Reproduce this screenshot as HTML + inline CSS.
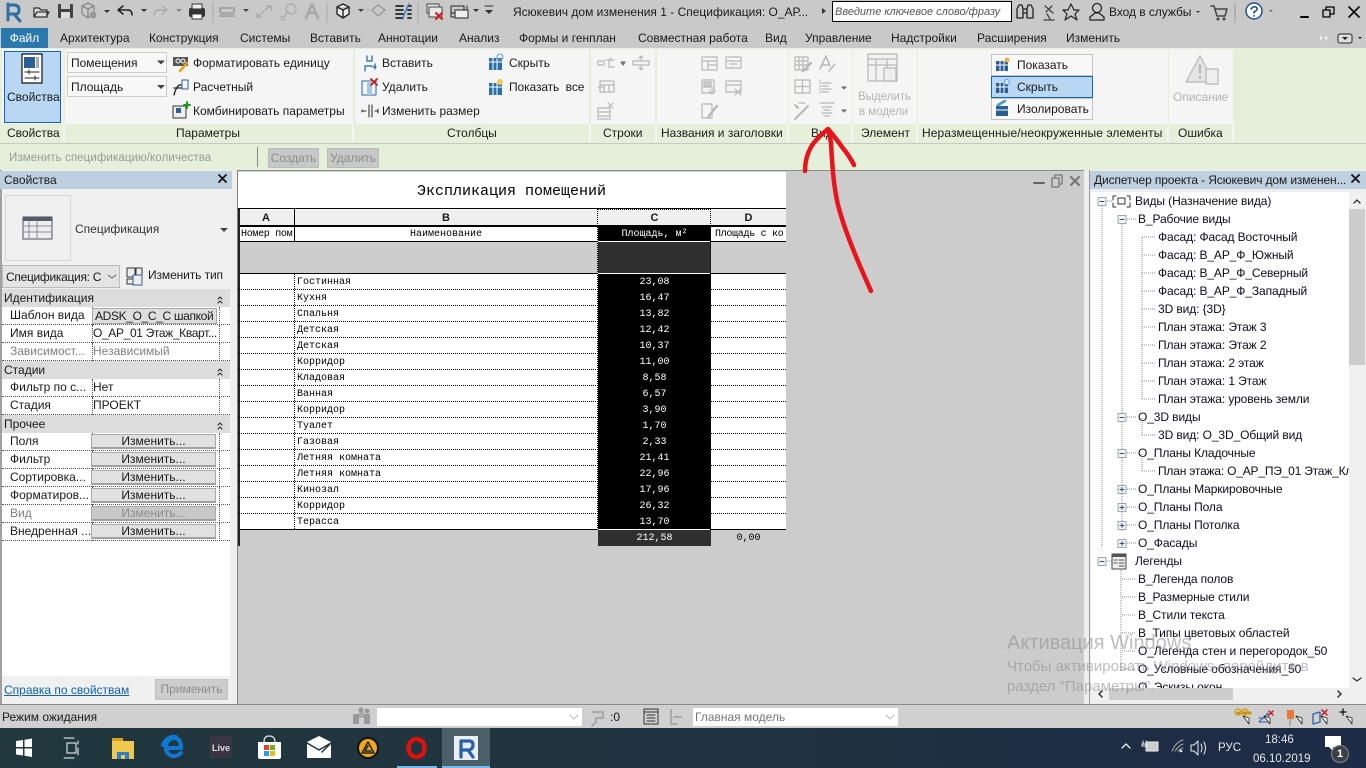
<!DOCTYPE html>
<html lang="ru"><head><meta charset="utf-8"><title>Revit</title>
<style>
html,body{margin:0;padding:0;width:1366px;height:768px;overflow:hidden;background:#ccc}
body{position:relative;font:12px "Liberation Sans","DejaVu Sans",sans-serif;color:#1a1a1a}
div,span{position:absolute;box-sizing:border-box}
.t{white-space:nowrap;line-height:16px;height:16px}
.b{background:#f5f5f5}
.g{background:#e6efd9}
.gl{color:#b4b4b4}
.m{font-family:"Liberation Mono",monospace;font-size:10px;color:#000;white-space:nowrap;line-height:16px;height:16px;margin-top:1px}
.w{color:#fff;width:113px;left:598px;text-align:center}
.row{left:238px;width:548px;height:0;border-top:1px dotted #000}
.pr{left:2px;width:228px;height:18px;border-bottom:1px dotted #555;background:#fff}
.pc{left:90px;width:1px;height:18px;border-left:1px dotted #555;top:0}
.pc2{left:217px;width:1px;height:18px;border-left:1px dotted #555;top:0}
.ph{left:2px;width:228px;height:18px;background:#dcdcdc}
.btn{left:91px;width:125px;height:15px;background:#e1e1e1;border:1px solid #a8a8a8;border-bottom:2px solid #a0a0a0;text-align:center;line-height:13px}
.tr{white-space:nowrap;line-height:16px;height:16px;color:#0c0c1c;letter-spacing:-.1px}
.sep{top:124px;width:2px;height:18px;background:#f5f5f5}
svg{position:absolute;overflow:visible}
</style></head><body>

<!-- title bar + tabs -->
<div style="left:0;top:0;width:1366px;height:48px;background:#c9c9c9"></div>
<div style="left:1px;top:28px;width:47px;height:20px;background:#2b78ae;color:#fff;text-align:center;line-height:20px">Файл</div>
<div class="t" style="left:60px;top:30px">Архитектура</div>
<div class="t" style="left:149px;top:30px">Конструкция</div>
<div class="t" style="left:240px;top:30px">Системы</div>
<div class="t" style="left:310px;top:30px">Вставить</div>
<div class="t" style="left:378px;top:30px">Аннотации</div>
<div class="t" style="left:459px;top:30px">Анализ</div>
<div class="t" style="left:519px;top:30px">Формы и генплан</div>
<div class="t" style="left:638px;top:30px">Совместная работа</div>
<div class="t" style="left:765px;top:30px">Вид</div>
<div class="t" style="left:805px;top:30px">Управление</div>
<div class="t" style="left:891px;top:30px">Надстройки</div>
<div class="t" style="left:977px;top:30px">Расширения</div>
<div class="t" style="left:1066px;top:30px">Изменить</div>
<div class="t" style="left:513px;top:4px;width:296px;overflow:hidden">Ясюкевич дом изменения 1 - Спецификация: О_АР...</div>
<div style="left:832px;top:1px;width:180px;height:21px;background:#fff;border:1px solid #000"></div>
<div class="t" style="left:835px;top:4px;font-style:italic;color:#555;font-size:11px;width:175px;overflow:hidden">Введите ключевое слово/фразу</div>
<div class="t" style="left:1109px;top:4px;letter-spacing:-.05px">Вход в службы</div>

<!-- ribbon -->
<div class="g" style="left:0;top:48px;width:1366px;height:96px"></div>
<div class="b" style="left:2px;top:49px;width:61px;height:75px"></div>
<div class="b" style="left:65px;top:49px;width:288px;height:75px"></div>
<div class="b" style="left:355px;top:49px;width:234px;height:75px"></div>
<div class="b" style="left:591px;top:49px;width:64px;height:75px"></div>
<div class="b" style="left:657px;top:49px;width:131px;height:75px"></div>
<div class="b" style="left:789px;top:49px;width:63px;height:75px"></div>
<div class="b" style="left:853px;top:49px;width:64px;height:75px"></div>
<div class="b" style="left:918px;top:49px;width:250px;height:75px"></div>
<div class="b" style="left:1169px;top:49px;width:64px;height:75px"></div>
<div class="sep" style="left:63px"></div><div class="sep" style="left:352px"></div><div class="sep" style="left:589px"></div>
<div class="sep" style="left:655px"></div><div class="sep" style="left:787px"></div><div class="sep" style="left:851px"></div>
<div class="sep" style="left:916px"></div><div class="sep" style="left:1167px"></div><div class="sep" style="left:1232px"></div>
<div style="left:0;top:143px;width:1366px;height:1px;background:#c8c8c8"></div>
<div style="left:4px;top:51px;width:57px;height:72px;background:#b9d6f2;border:1px solid #1066c0"></div>
<div class="t" style="left:7px;top:89px">Свойства</div>
<div style="left:67px;top:52px;width:100px;height:21px;background:#f8f8f8;border:1px solid #ccc"></div>
<div style="left:67px;top:76px;width:100px;height:21px;background:#f8f8f8;border:1px solid #ccc"></div>
<div class="t" style="left:71px;top:55px">Помещения</div>
<div class="t" style="left:71px;top:79px">Площадь</div>
<div class="t" style="left:193px;top:55px">Форматировать единицу</div>
<div class="t" style="left:193px;top:79px">Расчетный</div>
<div class="t" style="left:193px;top:103px">Комбинировать параметры</div>
<div class="t" style="left:382px;top:55px">Вставить</div>
<div class="t" style="left:382px;top:79px">Удалить</div>
<div class="t" style="left:382px;top:103px">Изменить размер</div>
<div class="t" style="left:509px;top:55px">Скрыть</div>
<div class="t" style="left:509px;top:79px;letter-spacing:-.1px">Показать&nbsp; все</div>
<div class="t gl" style="left:858px;top:89px;font-size:11.5px">Выделить</div>
<div class="t gl" style="left:859px;top:104px;font-size:11.5px">в модели</div>
<div style="left:991px;top:54px;width:102px;height:22px;background:#f8f8f8;border:1px solid #c4c4c4"></div>
<div style="left:991px;top:76px;width:102px;height:22px;background:#b9d6f2;border:1px solid #1066c0"></div>
<div style="left:991px;top:98px;width:102px;height:22px;background:#f8f8f8;border:1px solid #c4c4c4"></div>
<div class="t" style="left:1017px;top:57px">Показать</div>
<div class="t" style="left:1017px;top:79px">Скрыть</div>
<div class="t" style="left:1017px;top:101px">Изолировать</div>
<div class="t gl" style="left:1173px;top:89px">Описание</div>
<div class="t" style="left:7px;top:125px">Свойства</div>
<div class="t" style="left:176px;top:125px">Параметры</div>
<div class="t" style="left:447px;top:125px">Столбцы</div>
<div class="t" style="left:603px;top:125px">Строки</div>
<div class="t" style="left:661px;top:125px">Названия и заголовки</div>
<div class="t" style="left:811px;top:125px">Вид</div>
<div class="t" style="left:861px;top:125px">Элемент</div>
<div class="t" style="left:922px;top:125px;letter-spacing:.1px">Неразмещенные/неокруженные элементы</div>
<div class="t" style="left:1178px;top:125px">Ошибка</div>

<!-- mode bar -->
<div class="g" style="left:0;top:144px;width:1366px;height:26px"></div>
<div class="t" style="left:9px;top:150px;color:#9a9a9a;font-size:11.5px;letter-spacing:.1px">Изменить спецификацию/количества</div>
<div style="left:257px;top:147px;width:1px;height:20px;background:#888"></div>
<div style="left:268px;top:148px;width:51px;height:20px;background:#c8c8c8;border:1px solid #bbb;color:#8c8c8c;text-align:center;line-height:18px">Создать</div>
<div style="left:327px;top:148px;width:52px;height:20px;background:#c8c8c8;border:1px solid #bbb;color:#8c8c8c;text-align:center;line-height:18px">Удалить</div>

<!-- properties -->
<div style="left:0;top:170px;width:232px;height:535px;background:#f0f0f0;border-left:2px solid #a0a0a0;border-bottom:1px solid #888"></div>
<div style="left:0;top:171px;width:232px;height:18px;background:#bed0e0"></div>
<div class="t" style="left:4px;top:172px">Свойства</div>
<div style="left:5px;top:195px;width:66px;height:66px;background:#f0f0f0;border:1px solid #d4d4d4"></div>
<div class="t" style="left:75px;top:221px;color:#333">Спецификация</div>
<div style="left:2px;top:265px;width:118px;height:23px;background:#e4e4e4;border:1px solid #bbb"></div>
<div class="t" style="left:6px;top:269px;letter-spacing:-.3px">Спецификация: С</div>
<div class="t" style="left:148px;top:267px;letter-spacing:-.1px">Изменить тип</div>
<div class="ph" style="top:289px"></div><div class="t" style="left:4px;top:290px">Идентификация</div>
<div class="pr" style="top:307px"><div class="pc"></div><div class="pc2"></div></div>
<div class="pr" style="top:325px"><div class="pc"></div><div class="pc2"></div></div>
<div class="pr" style="top:343px"><div class="pc"></div><div class="pc2"></div></div>
<div class="ph" style="top:361px"></div><div class="t" style="left:4px;top:362px">Стадии</div>
<div class="pr" style="top:379px"><div class="pc"></div><div class="pc2"></div></div>
<div class="pr" style="top:397px"><div class="pc"></div><div class="pc2"></div></div>
<div class="ph" style="top:415px"></div><div class="t" style="left:4px;top:416px">Прочее</div>
<div class="pr" style="top:433px"><div class="pc"></div><div class="pc2"></div></div>
<div class="pr" style="top:451px"><div class="pc"></div><div class="pc2"></div></div>
<div class="pr" style="top:469px"><div class="pc"></div><div class="pc2"></div></div>
<div class="pr" style="top:487px"><div class="pc"></div><div class="pc2"></div></div>
<div class="pr" style="top:505px"><div class="pc"></div><div class="pc2"></div></div>
<div class="pr" style="top:523px"><div class="pc"></div><div class="pc2"></div></div>
<div class="t" style="left:10px;top:307px">Шаблон вида</div>
<div class="t" style="left:10px;top:325px">Имя вида</div>
<div class="t" style="left:10px;top:343px;color:#808080">Зависимост...</div>
<div class="t" style="left:10px;top:379px">Фильтр по с...</div>
<div class="t" style="left:10px;top:397px">Стадия</div>
<div class="t" style="left:10px;top:433px">Поля</div>
<div class="t" style="left:10px;top:451px">Фильтр</div>
<div class="t" style="left:10px;top:469px">Сортировка...</div>
<div class="t" style="left:10px;top:487px">Форматиров...</div>
<div class="t" style="left:10px;top:505px;color:#808080">Вид</div>
<div class="t" style="left:10px;top:523px">Внедренная ...</div>
<div style="left:92px;top:308px;width:125px;height:16px;background:#dedede;border:1px solid #a8a8a8"></div>
<div class="t" style="left:95px;top:308px;letter-spacing:-.35px">ADSK_О_С_С шапкой</div>
<div class="t" style="left:93px;top:325px;letter-spacing:-.35px">О_АР_01 Этаж_Кварт...</div>
<div class="t" style="left:93px;top:343px;color:#808080">Независимый</div>
<div class="t" style="left:93px;top:379px">Нет</div>
<div class="t" style="left:93px;top:397px">ПРОЕКТ</div>
<div class="btn" style="top:434px">Изменить...</div>
<div class="btn" style="top:452px">Изменить...</div>
<div class="btn" style="top:470px">Изменить...</div>
<div class="btn" style="top:488px">Изменить...</div>
<div class="btn" style="top:506px;background:#c8c8c8;color:#8c8c8c">Изменить...</div>
<div class="btn" style="top:524px">Изменить...</div>
<div style="left:2px;top:541px;width:228px;height:135px;background:#fff"></div>
<div class="t" style="left:4px;top:682px;color:#0f62b0;text-decoration:underline">Справка по свойствам</div>
<div style="left:155px;top:679px;width:73px;height:21px;background:#cdcdcd;border:1px solid #c0c0c0;color:#8c8c8c;text-align:center;line-height:19px">Применить</div>

<!-- canvas -->
<div style="left:232px;top:170px;width:858px;height:534px;background:#ccc;border-top:1px solid #8a8a8a"></div>
<div style="left:232px;top:170px;width:6px;height:534px;background:#eee;border-right:1px solid #808080"></div>
<div style="left:238px;top:172px;width:548px;height:374px;background:#fff"></div>
<div style="left:238px;top:242px;width:548px;height:31px;background:#cdcdcd"></div>
<div style="left:238px;top:530px;width:548px;height:16px;background:#ccc"></div>
<div style="left:598px;top:227px;width:113px;height:303px;background:#000"></div>
<div style="left:598px;top:242px;width:113px;height:31px;background:#2f2f2f"></div>
<div style="left:598px;top:530px;width:113px;height:16px;background:#2f2f2f"></div>
<div style="left:238px;top:210px;width:548px;height:16px;background:#efefef"></div>
<div style="left:238px;top:208px;width:548px;height:1px;background:#000"></div>
<div style="left:238px;top:225px;width:548px;height:2px;background:#000"></div>
<div style="left:238px;top:241px;width:360px;height:1px;background:#000"></div>
<div style="left:711px;top:241px;width:75px;height:1px;background:#000"></div>
<div style="left:598px;top:241px;width:113px;height:1px;background:#fff"></div>
<div style="left:238px;top:273px;width:360px;height:1px;background:#000"></div>
<div style="left:711px;top:273px;width:75px;height:1px;background:#000"></div>
<div style="left:598px;top:273px;width:113px;height:1px;background:#fff"></div>
<div style="left:238px;top:529px;width:360px;height:1px;background:#000"></div>
<div style="left:711px;top:529px;width:75px;height:1px;background:#000"></div>
<div style="left:598px;top:529px;width:113px;height:1px;background:#fff"></div>
<div style="left:238px;top:209px;width:2px;height:337px;background:#222"></div>
<div style="left:294px;top:209px;width:1px;height:32px;background:#000"></div>
<div style="left:294px;top:274px;height:255px;border-left:1px dotted #000"></div>
<div style="left:597px;top:209px;height:321px;border-left:1px dotted #000"></div>
<div style="left:710px;top:209px;height:321px;border-left:1px dotted #000"></div>
<div style="left:597px;top:209px;width:114px;height:17px;border:1px dotted #000"></div>
<div class="row" style="top:289px"></div><div class="row" style="top:305px"></div><div class="row" style="top:321px"></div>
<div class="row" style="top:337px"></div><div class="row" style="top:353px"></div><div class="row" style="top:369px"></div>
<div class="row" style="top:385px"></div><div class="row" style="top:401px"></div><div class="row" style="top:417px"></div>
<div class="row" style="top:433px"></div><div class="row" style="top:449px"></div><div class="row" style="top:465px"></div>
<div class="row" style="top:481px"></div><div class="row" style="top:497px"></div><div class="row" style="top:513px"></div>

<div class="m" style="left:417px;top:181px;width:190px;height:20px;line-height:20px;font-size:15px">Экспликация помещений</div>
<div class="t" style="left:238px;top:210px;width:56px;text-align:center;font-weight:bold;font-size:11px">A</div>
<div class="t" style="left:294px;top:210px;width:304px;text-align:center;font-weight:bold;font-size:11px">B</div>
<div class="t" style="left:598px;top:210px;width:113px;text-align:center;font-weight:bold;font-size:11px">C</div>
<div class="t" style="left:711px;top:210px;width:75px;text-align:center;font-weight:bold;font-size:11px">D</div>
<div class="m" style="left:241px;top:226px;letter-spacing:-.3px">Номер пом</div>
<div class="m" style="left:294px;top:226px;width:304px;text-align:center">Наименование</div>
<div class="m w" style="top:226px">Площадь, м²</div>
<div class="m" style="left:715px;top:226px;letter-spacing:-.3px">Площадь с ко</div>

<div class="m" style="left:297px;top:274px">Гостинная</div><div class="m w" style="top:274px">23,08</div>
<div class="m" style="left:297px;top:290px">Кухня</div><div class="m w" style="top:290px">16,47</div>
<div class="m" style="left:297px;top:306px">Спальня</div><div class="m w" style="top:306px">13,82</div>
<div class="m" style="left:297px;top:322px">Детская</div><div class="m w" style="top:322px">12,42</div>
<div class="m" style="left:297px;top:338px">Детская</div><div class="m w" style="top:338px">10,37</div>
<div class="m" style="left:297px;top:354px">Корридор</div><div class="m w" style="top:354px">11,00</div>
<div class="m" style="left:297px;top:370px">Кладовая</div><div class="m w" style="top:370px">8,58</div>
<div class="m" style="left:297px;top:386px">Ванная</div><div class="m w" style="top:386px">6,57</div>
<div class="m" style="left:297px;top:402px">Корридор</div><div class="m w" style="top:402px">3,90</div>
<div class="m" style="left:297px;top:418px">Туалет</div><div class="m w" style="top:418px">1,70</div>
<div class="m" style="left:297px;top:434px">Газовая</div><div class="m w" style="top:434px">2,33</div>
<div class="m" style="left:297px;top:450px">Летняя комната</div><div class="m w" style="top:450px">21,41</div>
<div class="m" style="left:297px;top:466px">Летняя комната</div><div class="m w" style="top:466px">22,96</div>
<div class="m" style="left:297px;top:482px">Кинозал</div><div class="m w" style="top:482px">17,96</div>
<div class="m" style="left:297px;top:498px">Корридор</div><div class="m w" style="top:498px">26,32</div>
<div class="m" style="left:297px;top:514px">Терасса</div><div class="m w" style="top:514px">13,70</div>
<div class="m w" style="top:530px">212,58</div>
<div class="m" style="left:711px;top:530px;width:75px;text-align:center">0,00</div>

<!-- project browser -->
<div style="left:1084px;top:170px;width:282px;height:535px;background:#eee"></div>
<div style="left:1089px;top:170px;width:1px;height:534px;background:#9a9a9a"></div>
<div style="left:1090px;top:171px;width:276px;height:18px;background:#bed0e0"></div>
<div class="t" style="left:1094px;top:172px;width:252px;overflow:hidden;letter-spacing:-.12px">Диспетчер проекта - Ясюкевич дом изменен...</div>
<div style="left:1091px;top:192px;width:258px;height:496px;background:#fff;overflow:hidden">
<div class="tr" style="left:44px;top:1px">Виды (Назначение вида)</div>
<div class="tr" style="left:47px;top:19px">В_Рабочие виды</div>
<div class="tr" style="left:67px;top:37px">Фасад: Фасад Восточный</div>
<div class="tr" style="left:67px;top:55px">Фасад: В_АР_Ф_Южный</div>
<div class="tr" style="left:67px;top:73px">Фасад: В_АР_Ф_Северный</div>
<div class="tr" style="left:67px;top:91px">Фасад: В_АР_Ф_Западный</div>
<div class="tr" style="left:67px;top:109px">3D вид: {3D}</div>
<div class="tr" style="left:67px;top:127px">План этажа: Этаж 3</div>
<div class="tr" style="left:67px;top:145px">План этажа: Этаж 2</div>
<div class="tr" style="left:67px;top:163px">План этажа: 2 этаж</div>
<div class="tr" style="left:67px;top:181px">План этажа: 1 Этаж</div>
<div class="tr" style="left:67px;top:199px">План этажа: уровень земли</div>
<div class="tr" style="left:47px;top:217px">О_3D виды</div>
<div class="tr" style="left:67px;top:235px">3D вид: О_3D_Общий вид</div>
<div class="tr" style="left:47px;top:253px">О_Планы Кладочные</div>
<div class="tr" style="left:67px;top:271px;letter-spacing:-.2px">План этажа: О_АР_ПЭ_01 Этаж_Кла</div>
<div class="tr" style="left:47px;top:289px">О_Планы Маркировочные</div>
<div class="tr" style="left:47px;top:307px">О_Планы Пола</div>
<div class="tr" style="left:47px;top:325px">О_Планы Потолка</div>
<div class="tr" style="left:47px;top:343px">О_Фасады</div>
<div class="tr" style="left:44px;top:361px">Легенды</div>
<div class="tr" style="left:47px;top:379px">В_Легенда полов</div>
<div class="tr" style="left:47px;top:397px">В_Размерные стили</div>
<div class="tr" style="left:47px;top:415px">В_Стили текста</div>
<div class="tr" style="left:47px;top:433px">В_Типы цветовых областей</div>
<div class="tr" style="left:47px;top:451px">О_Легенда стен и перегородок_50</div>
<div class="tr" style="left:47px;top:469px">О_Условные обозначения_50</div>
<div class="tr" style="left:47px;top:487px">О_Эскизы окон</div>
<svg width="258" height="496" style="left:0;top:0" fill="none" stroke="#888" stroke-dasharray="1 1">
<path d="M11 14V356M31 28V340M51 46V208M51 226V244M51 262V280M30 370V480"/>
<path d="M16 9H22M36 27H45M51 45H65M51 63H65M51 81H65M51 99H65M51 117H65M51 135H65M51 153H65M51 171H65M51 189H65M51 207H65M36 225H45M51 243H65M36 261H45M51 279H65M36 297H45M36 315H45M36 333H45M36 351H45M16 369H21M31 387H45M31 405H45M31 423H45M31 441H45M31 459H45M31 477H45"/>
</svg>
</div>
<div style="left:1349px;top:192px;width:17px;height:496px;background:#f0f0f0"></div>
<div style="left:1349px;top:209px;width:16px;height:156px;background:#cdcdcd"></div>
<div style="left:1091px;top:688px;width:275px;height:12px;background:#f0f0f0"></div>
<div style="left:1109px;top:688px;width:124px;height:12px;background:#cdcdcd"></div>
<div class="t" style="left:1007px;top:632px;color:#8a8a8a;opacity:.55;font-size:20px;height:22px;line-height:22px">Активация Windows</div>
<div class="t" style="left:1007px;top:658px;color:#8a8a8a;opacity:.55;font-size:15px;height:18px;line-height:18px">Чтобы активировать Windows, перейдите в</div>
<div class="t" style="left:1007px;top:678px;color:#8a8a8a;opacity:.55;font-size:15px;height:18px;line-height:18px">раздел "Параметры".</div>

<!-- status -->
<div style="left:0;top:704px;width:1366px;height:24px;background:#d0d0d0;border-top:1px solid #8a8a8a"></div>
<div class="t" style="left:2px;top:709px">Режим ожидания</div>
<div style="left:377px;top:708px;width:205px;height:18px;background:#fff"></div>
<div class="t" style="left:610px;top:709px">:0</div>
<div style="left:693px;top:708px;width:205px;height:18px;background:#fff"></div>
<div class="t" style="left:695px;top:709px;color:#777">Главная модель</div>

<!-- taskbar -->
<div style="left:0;top:728px;width:1366px;height:40px;background:linear-gradient(90deg,#21383f,#20323f 50%,#1d2b47)"></div>
<div style="left:442px;top:728px;width:48px;height:40px;background:#4b5f69"></div>
<div style="left:397px;top:766px;width:40px;height:2px;background:#76b9ed"></div>
<div style="left:442px;top:766px;width:48px;height:2px;background:#76b9ed"></div>
<div class="t" style="left:1218px;top:740px;color:#e8e8e8;font-size:11.5px">РУС</div>
<div class="t" style="left:1265px;top:732px;color:#e8e8e8;font-size:11.5px">18:46</div>
<div class="t" style="left:1253px;top:751px;color:#e8e8e8;font-size:11.5px">06.10.2019</div>

<!-- icons overlay -->
<svg width="1366" height="768" style="left:0;top:0" fill="none" stroke-linecap="round" stroke-linejoin="round">
<!-- QAT -->
<path d="M8 4V20M8 5H14Q19 5 19 10T14 14H8M14 14L20 21" stroke="#2a6fa8" stroke-width="3"/>
<path d="M34 17V8H39L41 10H47V17ZM34 17L37 12H49L46 17" stroke="#333" stroke-width="1.3" fill="#ddd"/>
<rect x="58" y="4" width="15" height="14" rx="1" fill="#444"/><rect x="61" y="4" width="9" height="5" fill="#ccc"/><rect x="61" y="12" width="9" height="6" fill="#ddd"/>
<path d="M82 6L88 3L94 6V14L88 18L82 14ZM82 6L88 9L94 6M88 9V18" stroke="#888" stroke-width="1.3"/><circle cx="93" cy="15" r="3.5" fill="#999"/>
<path d="M104 10l3 3 3-3z" fill="#333"/>
<path d="M123 6L118 10L123 14M119 10H128Q132 10 132 15" stroke="#222" stroke-width="1.5"/>
<path d="M141 9l3 3 3-3z" fill="#333"/>
<path d="M162 6L167 10L162 14M166 10H158Q154 10 154 15" stroke="#aaa" stroke-width="1.4"/>
<path d="M176 9l3 3 3-3z" fill="#888"/>
<rect x="189" y="8" width="16" height="9" rx="2" fill="#333"/><rect x="192" y="4" width="10" height="5" fill="#eee" stroke="#333"/><rect x="192" y="14" width="10" height="5" fill="#fff" stroke="#333"/>
<path d="M213 3V22M327 3V22M418 3V22" stroke="#aaa"/>
<path d="M220 8H234M220 16H234M220 8V12M234 8V12" stroke="#999" stroke-width="1.6"/><rect x="220" y="12" width="14" height="4" fill="#aaa"/>
<path d="M243 9l3 3 3-3z" fill="#444"/>
<path d="M257 17L270 6M257 13V17H261M267 6H271V10" stroke="#aaa" stroke-width="1.4"/>
<path d="M283 17L288 12" stroke="#aaa"/><circle cx="291" cy="9" r="5" stroke="#aaa" stroke-width="1.3"/><path d="M281 17h4v3h-4z" stroke="#aaa"/>
<path d="M306 18L312 4L318 18M308.500 13H316" stroke="#a8a8a8" stroke-width="2.6"/>
<path d="M337 7L343 4L349 7V14L343 18L337 14ZM337 7L343 10L349 7M343 10V18" stroke="#222" stroke-width="1.4" fill="#eee"/>
<path d="M358 9l3 3 3-3z" fill="#444"/>
<path d="M372 10L378 5L385 10L378 16Z" stroke="#999" stroke-width="1.4"/><path d="M367 10H372" stroke="#aaa"/>
<path d="M396 6H403M396 10H403M396 14H403M396 18H403M408 6H411M408 10H411M408 14H411M408 18H411" stroke="#222" stroke-width="1.8"/><path d="M409 4L402 19" stroke="#2a7fd0" stroke-width="1.4"/>
<rect x="427" y="4" width="12" height="9" stroke="#444" fill="#e8e8e8"/><rect x="429" y="7" width="13" height="10" stroke="#444" fill="#e8e8e8"/><path d="M436 13L442 19M442 13L436 19" stroke="#d01818" stroke-width="2"/>
<rect x="451" y="6" width="13" height="7" stroke="#222"/><rect x="455" y="10" width="13" height="8" stroke="#222" fill="#eee"/><path d="M451 13V17H454M467 6V9" stroke="#222"/>
<path d="M473 9l3 3 3-3z" fill="#333"/><path d="M485 6H493" stroke="#333"/><path d="M485 10l4 4 4-4z" fill="#333"/>
<!-- search icons -->
<path d="M822 8l4 3-4 3z" fill="#333"/>
<path d="M1017 18V9L1019 5H1022L1023 9V18ZM1027 18V9L1028 5H1031L1033 9V18ZM1023 9H1027M1023 13H1027" stroke="#222" stroke-width="1.3"/>
<path d="M1045 6L1053 13M1047 14L1050 19M1044 20H1054M1052 6L1046 12" stroke="#444" stroke-width="1.3"/>
<path d="M1071 4L1074 10H1079L1075 14L1077 20L1071 16L1065 20L1067 14L1063 10H1068Z" stroke="#222" stroke-width="1.2"/>
<circle cx="1097" cy="8" r="4.500" stroke="#222" stroke-width="1.3"/><path d="M1090 20V17L1095 13H1099L1104 17V20Z" stroke="#222" stroke-width="1.3"/>
<path d="M1196 11l2 2 2-2z" fill="#333"/>
<path d="M1211 6H1214L1217 16H1225L1227 9H1215" stroke="#444" stroke-width="1.5"/><circle cx="1218" cy="19" r="1.500" fill="#444"/><circle cx="1224" cy="19" r="1.500" fill="#444"/>
<path d="M1235 3V22" stroke="#999"/>
<circle cx="1254" cy="11" r="8" stroke="#1e4f96" stroke-width="1.5" fill="#fff"/>
<path d="M1251 9Q1254 5 1257 8Q1258 10 1254 12V13M1254 15.500V16" stroke="#1e4f96" stroke-width="1.600"/>
<path d="M1269 10l2 2 2-2z" fill="#666"/>
<path d="M1301 17H1308" stroke="#000" stroke-width="2"/><rect x="1323" y="10" width="7" height="7" stroke="#000" stroke-width="1.300"/><path d="M1326 10V7H1334V14H1330" stroke="#000" stroke-width="1.300"/>
<path d="M1349 7L1359 17M1359 7L1349 17" stroke="#111" stroke-width="1.800"/>
<path d="M1320 35l3 3-3 3zM1325 35l3 3-3 3z" fill="#eee"/><rect x="1338" y="34" width="14" height="9" rx="2" stroke="#222" fill="#ddd"/><path d="M1342 37h6l-3 3z" fill="#222"/><path d="M1358 37l2 2 2-2z" fill="#222"/>
<!-- properties big icon -->
<rect x="22" y="54" width="20" height="29" stroke="#111" fill="#fff" stroke-width="1.200"/><rect x="24" y="57" width="11" height="11" fill="#2a5f96"/><rect x="36" y="57" width="3" height="11" fill="#aaa"/><path d="M25 72H39M25 78H39M29 70V74M35 76V80" stroke="#222"/>
<path d="M157 60.500h8l-4 4z" fill="#444"/><path d="M157 85h8l-4 4z" fill="#444"/>
<rect x="173" y="57" width="15" height="9" fill="#555"/><circle cx="178" cy="61" r="2" stroke="#fff"/><circle cx="183" cy="61" r="2" stroke="#fff"/><path d="M180 71L187 63" stroke="#e8a020" stroke-width="2.500"/>
<path d="M174 95Q177 84 181 85M174 88H181" stroke="#222" stroke-width="1.300"/><rect x="182" y="80" width="6" height="9" stroke="#2a5f96"/>
<rect x="173" y="106" width="13" height="12" stroke="#333" fill="#eee"/><rect x="176" y="108" width="5" height="5" fill="#2a5f96"/><path d="M184 105H190M187 102V108" stroke="#18a018" stroke-width="2"/>
<path d="M367 56V61H372V56M368 66H365V71M365 66H372M375 64V69M373 67H376" stroke="#1e5fa8" stroke-width="1.200"/>
<rect x="362" y="81" width="14" height="14" stroke="#1e5fa8"/><rect x="367" y="81" width="5" height="14" fill="#a8c8e8"/><path d="M371 79L377 85M377 79L371 85" stroke="#d01818" stroke-width="1.800"/>
<path d="M362 111H366M362 110V112M369 105V117M372 105V117M375 111H378M378 109V113" stroke="#222"/>
<rect x="489" y="58" width="13" height="12" fill="#2a6fa8"/><path d="M489 62H502M493 58V70M497 58V70" stroke="#fff"/><circle cx="500" cy="57" r="3" stroke="#5a9be0"/>
<rect x="489" y="83" width="13" height="12" fill="#2a6fa8"/><path d="M489 87H502M493 83V95M497 83V95" stroke="#fff"/><circle cx="500" cy="82" r="3" fill="#f5c850"/>
<!-- greyed ribbon icons -->
<g stroke="#b8b8b8" stroke-width="1.200">
<rect x="598" y="61" width="6" height="4"/><path d="M606 60H609V67H614M609 60H614M611 58L609 60"/><path d="M621 62h4l-2 3z" fill="#777" stroke="#777"/>
<rect x="633" y="61" width="16" height="4"/><path d="M641 56V60M641 66V70M639 58L641 56L643 58M639 68L641 70L643 68"/>
<rect x="600" y="81" width="14" height="11"/><path d="M600 85H614M604 85V92M609 85V92M598 87H604"/>
<rect x="598" y="108" width="12" height="11"/><path d="M598 112H610M598 116H610M608 103L613 108M613 103L608 108"/>
<rect x="702" y="57" width="15" height="13"/><path d="M702 61H717M708 61V70M708 65H717"/>
<rect x="726" y="57" width="15" height="11"/><path d="M726 61H741M730 64H737"/>
<rect x="702" y="80" width="12" height="13"/><path d="M712 87V94M709 91L712 94L715 91"/><rect x="704" y="82" width="7" height="5" fill="#ccc"/>
<rect x="726" y="81" width="15" height="11"/><path d="M726 85H741M735 89L741 95M741 89L735 95"/>
<rect x="702" y="104" width="10" height="14"/><path d="M708 117L717 106" stroke-width="2.400"/>
<rect x="795" y="57" width="13" height="13"/><path d="M795 61H808M795 65H808M799 57V70M803 57V70"/><path d="M803 71L811 63" stroke-width="2.400"/>
<path d="M820 69L826 56L830 66M822 65H829M829 71L835 64" stroke-width="1.500"/>
<rect x="795" y="80" width="15" height="13"/><path d="M802.500 80V93M795 86.500H810"/>
<path d="M820 80V93" stroke-dasharray="1 2"/><path d="M822 83H831M822 86H828M822 89H831M822 92H828"/>
<path d="M842 87h4l-2 2z" fill="#777" stroke="#777"/>
<path d="M798 108L795 105M795 119L808 106" stroke-width="2"/><path d="M799 103L805 103"/>
<path d="M820 103H834M822 107H832M824 110H830M822 113H832M824 116H830"/>
<path d="M842 110h4l-2 2z" fill="#777" stroke="#777"/>
<rect x="868" y="54" width="29" height="27" fill="#f2f2f2"/><path d="M868 59H897M868 65H897M876 59V81M887 59V81"/><rect x="884" y="68" width="12" height="13" fill="#eee"/>
<path d="M1200 56L1186 82H1214Z" fill="#e4e4e4"/><path d="M1200 65V73M1200 77V78" stroke-width="2.200"/><rect x="1206" y="69" width="12" height="15" fill="#eee"/>
</g>
<!-- Show/hide/isolate -->
<g>
<rect x="996" y="61" width="12" height="10" fill="#2a5f96"/><path d="M996 65H1008M1000 61V71M1004 61V71" stroke="#fff"/><circle cx="1007" cy="60" r="2.500" fill="#f0b040"/>
<rect x="996" y="83" width="12" height="10" fill="#2a5f96"/><path d="M996 87H1008M1000 83V93M1004 83V93" stroke="#fff"/><circle cx="1007" cy="82" r="2.500" stroke="#5a9be0" fill="#dbe8f5"/>
<rect x="996" y="106" width="12" height="10" fill="#2a5f96"/><path d="M996 110H1008" stroke="#fff"/><path d="M998 105L1005 101" stroke="#3a9ad0" stroke-width="2.500"/>
</g>
<!-- properties panel icons -->
<path d="M219 175L226 182M226 175L219 182M1352 175L1359 182M1359 175L1352 182" stroke="#111" stroke-width="1.800"/>
<rect x="23" y="217" width="29" height="22" fill="#eee" stroke="#4a5060"/><rect x="23" y="217" width="29" height="4" fill="#565c68"/><path d="M23 226H52M23 232H52M29 221V239M37 221V239" stroke="#8a8e98"/>
<path d="M220 228h8l-4 4z" fill="#444"/><path d="M108 275l4 3 4-3" stroke="#666"/>
<rect x="127" y="268" width="8" height="9" stroke="#333" fill="#eee"/><rect x="136" y="268" width="6" height="8" stroke="#333" fill="#eee"/><rect x="127" y="279" width="8" height="5" stroke="#333"/><rect x="133" y="275" width="9" height="10" stroke="#2a5f96" fill="#eee"/>
<path d="M218 299l2-2 2 2M218 303l2-2 2 2M218 371l2-2 2 2M218 375l2-2 2 2M218 425l2-2 2 2M218 429l2-2 2 2" stroke="#222"/>
<!-- canvas window controls -->
<path d="M1034 183H1044" stroke="#666" stroke-width="2"/><rect x="1052" y="178" width="7" height="9" stroke="#777" stroke-width="1.300"/><path d="M1055 178V175H1062V184H1059" stroke="#777" stroke-width="1.300"/><path d="M1071 177L1079 185M1079 177L1071 185" stroke="#777" stroke-width="2.200"/>
<!-- tree -->
<g fill="#f4f4f4" stroke="#9aa">
<rect x="1098" y="197.500" width="8" height="8"/><rect x="1118" y="215.500" width="8" height="8"/><rect x="1118" y="413.500" width="8" height="8"/><rect x="1118" y="449.500" width="8" height="8"/><rect x="1118" y="485.500" width="8" height="8"/><rect x="1118" y="503.500" width="8" height="8"/><rect x="1118" y="521.500" width="8" height="8"/><rect x="1118" y="539.500" width="8" height="8"/><rect x="1098" y="557.500" width="8" height="8"/>
</g>
<path d="M1100 201.500H1104M1120 219.500H1124M1120 417.500H1124M1120 453.500H1124M1120 489.500H1124M1122 487.500V491.500M1120 507.500H1124M1122 505.500V509.500M1120 525.500H1124M1122 523.500V527.500M1120 543.500H1124M1122 541.500V545.500M1100 561.500H1104" stroke="#2a4f96"/>
<path d="M1116 196H1113V200M1127 196H1130V200M1113 203V207H1116M1130 203V207H1127" stroke="#333"/><rect x="1118" y="198" width="7" height="6" stroke="#333"/>
<rect x="1112" y="554" width="14" height="15" stroke="#444" fill="#eee"/><rect x="1112" y="554" width="14" height="3" fill="#555"/><path d="M1114 560H1117M1119 560H1124M1114 563H1117M1119 563H1124M1119 566H1124" stroke="#555"/>
<path d="M1354 203l3-3 3 3M1353 678l4 3 4-3" stroke="#333" stroke-width="1.300"/>
<path d="M1102 691l-3 3 3 3M1338 691l3 3-3 3" stroke="#333" stroke-width="1.500"/>
<!-- status -->
<rect x="353" y="714" width="6" height="10" fill="#999"/><rect x="364" y="714" width="6" height="10" fill="#999"/><rect x="359" y="712" width="5" height="6" fill="#aaa"/><circle cx="361" cy="710" r="2.500" fill="#999"/><circle cx="367" cy="711" r="2.500" fill="#999"/>
<path d="M570 715l4 4 4-4M886 715l4 4 4-4" stroke="#bbb"/>
<path d="M593 712H603V718H596V722L592 726" stroke="#aaa" stroke-width="2.200"/>
<rect x="644" y="709" width="14" height="15" stroke="#333"/><path d="M644 712H658M647 715H655M647 718H655M647 721H655" stroke="#333"/>
<path d="M671 710V724H677M674 717H681" stroke="#aaa" stroke-width="2"/>
<path d="M1238 713H1244M1244 713H1250" stroke="#c89010" stroke-width="3"/><circle cx="1238" cy="712" r="3" stroke="#d8a020" stroke-width="1.500"/><circle cx="1245" cy="712" r="3" stroke="#d8a020" stroke-width="1.500"/>
<path d="M1259 722L1268 713V722ZM1259 718H1268" stroke="#2a5fb0"/><path d="M1269 711L1273 715M1273 711L1269 715" stroke="#d01818" stroke-width="1.500"/>
<rect x="1287" y="710" width="7" height="9" fill="#e87840"/><path d="M1290 719V726" stroke="#888"/>
<path d="M1313 714V724L1320 722V712Z" stroke="#2a5fb0" stroke-width="1.300"/><path d="M1322 710L1327 715M1327 710L1322 715" stroke="#d01818" stroke-width="1.500"/>
<path d="M1340 712H1346M1343 709V715" stroke="#111" stroke-width="1.300"/>
<path d="M1243 716L1249 724V718Z M1264 716L1270 724V718Z M1296 716L1302 724V718Z M1321 716L1327 724V718Z M1346 716L1352 724V718Z" fill="#fff" stroke="#222" stroke-width=".8"/>
<!-- windows taskbar -->
<path d="M16 741L23 740V747H16ZM24.500 739.800L32 738.500V747H24.500ZM16 748.500H23V755.500L16 754.500ZM24.500 748.500H32V757L24.500 755.800Z" fill="#fff"/>
<path d="M64 738H74M64 758H74M67 743H76V753H67ZM78 741V744M78 748V755" stroke="#fff"/>
<rect x="112" y="738" width="11" height="5" fill="#d8a018"/><rect x="112" y="741" width="22" height="18" fill="#f0c850"/><path d="M117 752H129V759H125V755H121V759H117Z" fill="#2a7fc8"/>
<path d="M181 753Q175 758 170 755Q165 752 166 745Q168 738 175 738Q181 739 181 748H168M163 745Q167 736 176 737" stroke="#0f78d4" stroke-width="4"/>
<rect x="210" y="736" width="22" height="22" fill="#3a3542"/>
<path d="M258 742H281V757Q281 759 279 759H260Q258 759 258 757Z" fill="#fff"/><path d="M264 742Q264 736 269 736Q275 736 275 742" stroke="#ddd" stroke-width="1.300"/>
<rect x="264" y="745" width="5" height="5" fill="#e84020"/><rect x="270" y="745" width="5" height="5" fill="#70b020"/><rect x="264" y="751" width="5" height="5" fill="#20a0e8"/><rect x="270" y="751" width="5" height="5" fill="#f0b818"/>
<path d="M307 742L319 736L331 742V758H307Z" fill="#fff"/><path d="M307 743L319 750L331 743L322 752" stroke="#20323f" stroke-width="1.500"/>
<circle cx="368" cy="748" r="11" fill="#111"/><circle cx="368" cy="748" r="9" fill="#f0a818"/><path d="M368 742L362 753H374ZM368 746L365 751H371" stroke="#222" stroke-width="1.500"/>
<ellipse cx="416.500" cy="748" rx="8" ry="9" stroke="#e01010" stroke-width="4.500"/>
<rect x="454" y="736" width="24" height="24" fill="#e8eef4"/><path d="M461 757V741H469Q473 741 473 745T469 750H461M468 750L473 757" stroke="#2a5fa8" stroke-width="3.200"/>
<path d="M1122 748L1126 744L1130 748" stroke="#eee" stroke-width="1.300"/>
<rect x="1146" y="742" width="12" height="9" fill="#ccc" stroke="#eee"/><path d="M1143 741V744M1146 741V744M1142 744H1147V746H1142Z" stroke="#eee"/>
<path d="M1172 751Q1176 742 1183 740M1175 751Q1178 746 1183 744M1178 751Q1180 749 1183 748" stroke="#aaa"/><circle cx="1181" cy="751" r="1.300" fill="#eee"/>
<path d="M1191 745H1194L1198 741V755L1194 751H1191ZM1201 744Q1203 748 1201 752M1204 742Q1207 748 1204 754" stroke="#eee"/>
<path d="M1325 736H1341V747H1333V751L1329 747H1325Z" fill="#fff"/><circle cx="1340" cy="754" r="8.500" fill="#3a4048" stroke="#888"/>
<!-- red arrow -->
<path d="M871 291C858 262 845 232 838 205C833 184 832 160 831 143C830 137 829 133 828 129M828 129C822 134 815 140 811 147C807 154 805 162 805 171M828 129C833 135 838 141 842 147C847 153 851 159 854 165" stroke="#e8141c" stroke-width="4.500"/>
</svg>
<div class="t" style="left:211px;top:740px;width:20px;text-align:center;color:#ddd;font-size:9px;font-weight:bold">Live</div>
<div class="t" style="left:1332px;top:746px;width:16px;text-align:center;color:#fff;font-size:11px;font-weight:bold">1</div>
</body></html>
